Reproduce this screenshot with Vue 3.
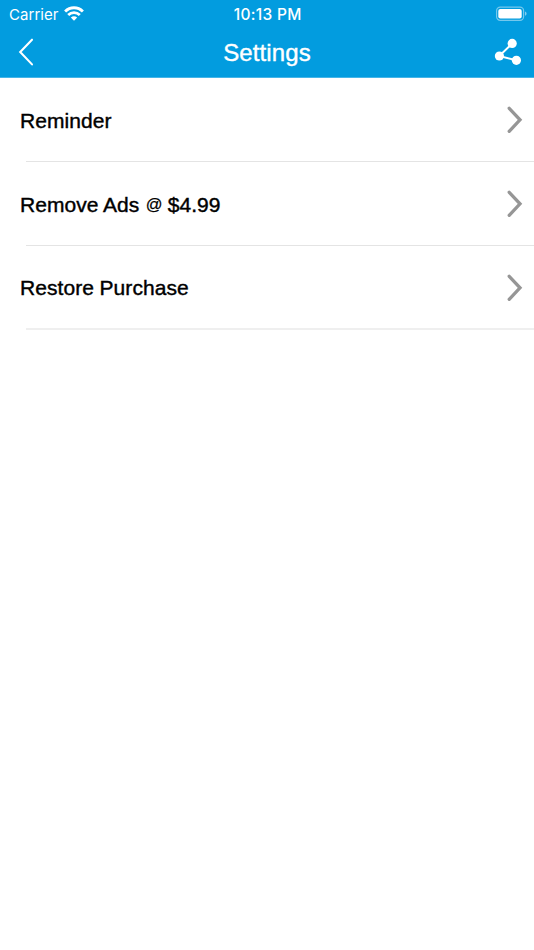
<script setup>
const rows = [
  [{ text: 'Reminder' }],
  [{ text: 'Remove Ads ' }, { text: '@', small: true }, { text: ' $4.99' }],
  [{ text: 'Restore Purchase' }],
]
</script>

<template>
  <main class="screen">
    <header class="header">
      <div class="status">
        <div class="network">
          <span class="carrier">Carrier</span>
          <svg class="wifi" width="20" height="15" viewBox="0 0 20 15">
            <g fill="none" stroke="#fff" stroke-width="2.8">
              <path d="M1.1 5.5C6.1.5 13.9.5 18.9 5.5" />
              <path d="M4.2 9.1C7.5 5.9 12.5 5.9 15.8 9.1" />
            </g>
            <path d="M6.8 11.6Q10 8.8 13.2 11.6L10 14.8Z" fill="#fff" />
          </svg>
        </div>
        <span class="time">10:13 PM</span>
        <svg class="battery" width="32" height="16" viewBox="0 0 32 16">
          <rect x="1.6" y="1.1" width="27" height="13.2" rx="3.6" fill="none" stroke="#fff" stroke-opacity=".45" stroke-width="1.2" />
          <rect x="3.3" y="2.9" width="23.4" height="9.6" rx="2" fill="#fff" />
          <path d="M30 5.6Q31.6 6.2 31.6 7.7T30 9.8Z" fill="#fff" fill-opacity=".5" />
        </svg>
      </div>
      <nav class="bar">
        <svg class="back" width="20" height="30" viewBox="0 0 20 30">
          <path d="M16 2.7L4.2 15L16 27.4" fill="none" stroke="#fff" stroke-width="2.1" stroke-linecap="round" />
        </svg>
        <h1>Settings</h1>
        <svg class="share" width="28" height="28" viewBox="0 0 28 28">
          <path d="M18.3 5.5L5.3 18L22.5 22.3" fill="none" stroke="#fff" stroke-width="2" />
          <g fill="#fff">
            <circle cx="18.2" cy="5.4" r="4.6" />
            <circle cx="5.4" cy="18" r="4.6" />
            <circle cx="22.4" cy="22.3" r="4.6" />
          </g>
        </svg>
      </nav>
    </header>
    <ul>
      <li v-for="(row, i) in rows" :key="i">
        <span class="label"><span v-for="(part, j) in row" :key="j" :class="{ small: part.small }">{{ part.text }}</span></span>
        <svg width="16" height="28" viewBox="0 0 16 28">
          <path d="M2.2 2.3L13 13.8L2.2 25.3" fill="none" stroke="#969696" stroke-width="3.3" stroke-linecap="round" />
        </svg>
      </li>
    </ul>
  </main>
</template>

<style>
body {
  background: #fff;
}
</style>

<style scoped>
.screen {
  width: 534px;
  min-height: 950px;
  background: #fff;
  font-family: "Liberation Sans", Arial, sans-serif;
}
.header {
  height: 78px;
  box-sizing: border-box;
  border-bottom: 1px solid #45b5e8;
  background: #029cdf;
  color: #fff;
}
.status {
  display: grid;
  grid-template-columns: 1fr auto 1fr;
  align-items: center;
  height: 27px;
  padding: 0 7.5px 0 9px;
  font: 400 15.5px/27px Inter, sans-serif;
}
.network {
  display: flex;
  align-items: center;
  gap: 5.5px;
}
.carrier {
  padding-top: 1px;
  font-size: 15px;
  letter-spacing: 0.05px;
}
.wifi {
  margin-top: -2px;
}
.time {
  padding-top: 1px;
  font-weight: 500;
  letter-spacing: 0.3px;
}
.battery {
  justify-self: end;
}
.bar {
  display: grid;
  grid-template-columns: 1fr auto 1fr;
  align-items: center;
  height: 50px;
  padding: 0 12px 0 16px;
}
h1 {
  margin: 0;
  padding: 2px 4px 0 0;
  font-size: 24px;
  font-weight: 400;
  line-height: 48px;
  letter-spacing: 0.1px;
  -webkit-text-stroke: 0.4px #fff;
}
.share {
  justify-self: end;
}
ul {
  margin: 0;
  padding: 0;
  list-style: none;
}
li {
  display: flex;
  align-items: center;
  justify-content: space-between;
  height: 84px;
  box-sizing: border-box;
  padding: 0 11.4px 0 20px;
  background: linear-gradient(#e4e4e4, #e4e4e4) 26px 100% / 508px 1px no-repeat;
}
li:last-child {
  height: 83.8px;
  background: linear-gradient(#efefef, #efefef) 26px 100% / 508px 2px no-repeat;
}
.label {
  padding-top: 1px;
  font-size: 21px;
  letter-spacing: 0.06px;
  word-spacing: -0.3px;
  white-space: pre;
  color: #000;
  -webkit-text-stroke: 0.4px #000;
}
.small {
  margin: 0 -0.6px 0 0.9px;
  font-size: 16.5px;
  vertical-align: 1.5px;
  -webkit-text-stroke-width: 0.25px;
}
</style>
